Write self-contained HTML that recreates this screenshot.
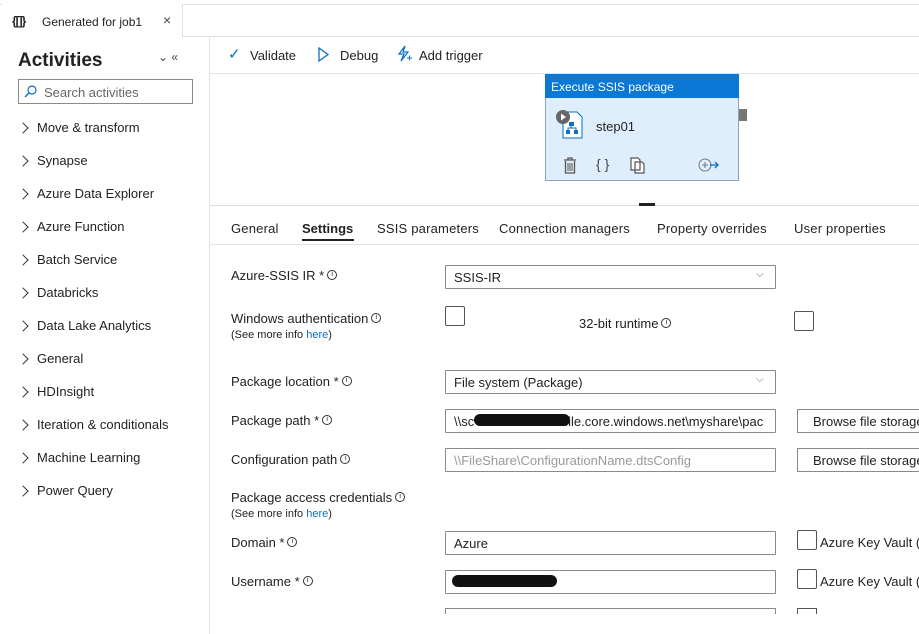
<!DOCTYPE html>
<html><head><style>
*{box-sizing:border-box;margin:0;padding:0}
body{width:919px;height:634px;overflow:hidden;background:#fff;font-family:"Liberation Sans",sans-serif;color:#222;font-size:13px;position:relative}
.a{position:absolute;white-space:nowrap}
.inp{position:absolute;border:1px solid #8a8a8a;height:24px;background:#fff;padding:4px 8px;font-size:13px;border-radius:1px;overflow:hidden;white-space:nowrap}
.cb{position:absolute;border:1px solid #555;width:20px;height:20px;background:#fff;border-radius:2px}
.btn{position:absolute;border:1px solid #8a8a8a;height:24px;padding:4px 15px;font-size:13px;white-space:nowrap;overflow:hidden}
.i{display:inline-block;width:10px;height:10px;border:1px solid #333;border-radius:50%;font-size:7px;line-height:8px;text-align:center;vertical-align:4px;margin-left:3px}
.side div{position:absolute;left:22px;font-size:13px}
.side div span{display:inline-block;width:8px;height:8px;border-right:1.3px solid #333;border-top:1.3px solid #333;transform:rotate(45deg);margin-right:10px;margin-left:-3px}
.lnk{color:#0a6fc2}
.sm{font-size:11px}
.tab{letter-spacing:0.2px}
</style></head><body>
<!-- top -->
<div class="a" style="left:0;top:4px;width:919px;height:1px;background:#e1e1e1"></div>
<div class="a" style="left:2px;top:4px;width:181px;height:33px;border-right:1px solid #e1e1e1;background:#fff"></div>
<div class="a" style="left:12px;top:14px;font-size:12px;font-weight:bold;letter-spacing:-1px">{[]}</div>
<div class="a" style="left:42px;top:15px;font-size:12px">Generated for job1</div>
<div class="a" style="left:163px;top:12px;font-size:14px;color:#444">×</div>
<div class="a" style="left:183px;top:36px;width:736px;height:1px;background:#e1e1e1"></div>
<!-- sidebar -->
<div class="a" style="left:209px;top:36px;width:1px;height:598px;background:#e1e1e1"></div>
<div class="a" style="left:18px;top:50px;font-size:19px;font-weight:bold;color:#222">Activities</div>
<div class="a" style="left:158px;top:50px;font-size:12px;color:#444">⌄ «</div>
<div class="a" style="left:18px;top:79px;width:175px;height:25px;border:1px solid #8a8a8a"></div>
<svg class="a" style="left:24px;top:85px" width="13" height="13"><circle cx="8" cy="5" r="4" fill="none" stroke="#0a6fc2" stroke-width="1.2"/><line x1="5" y1="8" x2="1" y2="12" stroke="#0a6fc2" stroke-width="1.3"/></svg>
<div class="a" style="left:44px;top:85px;color:#666">Search activities</div>
<div class="side">
<div style="top:120px"><span></span>Move &amp; transform</div>
<div style="top:153px"><span></span>Synapse</div>
<div style="top:186px"><span></span>Azure Data Explorer</div>
<div style="top:219px"><span></span>Azure Function</div>
<div style="top:252px"><span></span>Batch Service</div>
<div style="top:285px"><span></span>Databricks</div>
<div style="top:318px"><span></span>Data Lake Analytics</div>
<div style="top:351px"><span></span>General</div>
<div style="top:384px"><span></span>HDInsight</div>
<div style="top:417px"><span></span>Iteration &amp; conditionals</div>
<div style="top:450px"><span></span>Machine Learning</div>
<div style="top:483px"><span></span>Power Query</div>
</div>
<!-- toolbar -->
<div class="a" style="left:228px;top:45px;color:#0a6fc2;font-size:15px">✓</div>
<div class="a" style="left:250px;top:48px">Validate</div>
<svg class="a" style="left:317px;top:46px" width="13" height="17"><path d="M2 2 L11 8.5 L2 15 Z" fill="none" stroke="#0a6fc2" stroke-width="1.3"/></svg>
<div class="a" style="left:340px;top:48px">Debug</div>
<svg class="a" style="left:396px;top:45px" width="16" height="18"><path d="M9 1 L3 9 L8 9 L5 16 L12 7 L7 7 Z" fill="none" stroke="#0a6fc2" stroke-width="1.2"/><path d="M11 13h5M13.5 10.5v5" stroke="#0a6fc2"/></svg>
<div class="a" style="left:419px;top:48px">Add trigger</div>
<div class="a" style="left:210px;top:73px;width:709px;height:1px;background:#e1e1e1"></div>
<!-- node -->
<div class="a" style="left:545px;top:74px;width:194px;height:107px;background:#deeefc;border:1px solid #8aa4bb"></div>
<div class="a" style="left:545px;top:74px;width:194px;height:24px;background:#0a78d4;color:#fff;font-size:12px;padding:6px 6px">Execute SSIS package</div>
<div class="a" style="left:739px;top:109px;width:8px;height:12px;background:#777"></div>
<svg class="a" style="left:555px;top:109px" width="32" height="32"><path d="M8 3 H22 L27 8 V29 H8 Z" fill="#fff" stroke="#0a6fc2"/><rect x="14" y="13" width="5" height="4" fill="#0a6fc2"/><rect x="11" y="21" width="4" height="4" fill="#0a6fc2"/><rect x="19" y="21" width="4" height="4" fill="#0a6fc2"/><path d="M16 17v2M13 21v-2h8v2" stroke="#0a6fc2" fill="none"/><circle cx="8" cy="8" r="7" fill="#666"/><path d="M6 4.5 L11 8 L6 11.5Z" fill="#fff"/></svg>
<div class="a" style="left:596px;top:119px;font-size:13px">step01</div>
<svg class="a" style="left:562px;top:157px" width="16" height="17"><path d="M2 3h12M6 3V1h4v2M3.5 4v12h9V4" fill="none" stroke="#555" stroke-width="1.3"/><path d="M6 6v8M8 6v8M10 6v8" stroke="#555"/></svg>
<div class="a" style="left:596px;top:156px;font-size:14px;color:#444">{ }</div>
<svg class="a" style="left:630px;top:157px" width="16" height="17"><path d="M1 1h7l2 2v10H1Z M5 5h7l2 2v9H5Z" fill="#fff" stroke="#555" stroke-width="1.2"/></svg>
<svg class="a" style="left:698px;top:158px" width="24" height="14"><circle cx="7" cy="7" r="6" fill="none" stroke="#777"/><path d="M7 4v6M4 7h6" stroke="#777"/><path d="M12 7h8M17 4l3 3-3 3" fill="none" stroke="#0a6fc2" stroke-width="1.3"/></svg>
<!-- splitter -->
<div class="a" style="left:210px;top:205px;width:709px;height:1px;background:#ddd"></div>
<div class="a" style="left:639px;top:203px;width:16px;height:3px;background:#222"></div>
<!-- tabs -->
<div class="a tab" style="left:231px;top:221px">General</div>
<div class="a" style="left:302px;top:221px;font-weight:bold">Settings</div>
<div class="a" style="left:302px;top:239px;width:52px;height:2px;background:#222"></div>
<div class="a tab" style="left:377px;top:221px">SSIS parameters</div>
<div class="a tab" style="left:499px;top:221px">Connection managers</div>
<div class="a tab" style="left:657px;top:221px">Property overrides</div>
<div class="a tab" style="left:794px;top:221px">User properties</div>
<div class="a" style="left:210px;top:244px;width:709px;height:1px;background:#e1e1e1"></div>
<!-- form -->
<div class="a" style="left:231px;top:268px">Azure-SSIS IR *<span class="i">i</span></div>
<div class="inp" style="left:445px;top:265px;width:331px">SSIS-IR</div><div class="a" style="left:756px;top:269px;color:#666;font-size:10px">⌵</div>
<div class="a" style="left:231px;top:311px">Windows authentication<span class="i">i</span></div>
<div class="a sm" style="left:231px;top:329px">(See more info <span class="lnk">here</span>)</div>
<div class="cb" style="left:445px;top:306px"></div>
<div class="a" style="left:579px;top:316px">32-bit runtime<span class="i">i</span></div>
<div class="cb" style="left:794px;top:311px"></div>
<div class="a" style="left:231px;top:374px">Package location *<span class="i">i</span></div>
<div class="inp" style="left:445px;top:370px;width:331px">File system (Package)</div><div class="a" style="left:756px;top:374px;color:#666;font-size:10px">⌵</div>
<div class="a" style="left:231px;top:413px">Package path *<span class="i">i</span></div>
<div class="inp" style="left:445px;top:409px;width:331px">\\sc&nbsp;&nbsp;&nbsp;&nbsp;&nbsp;&nbsp;&nbsp;&nbsp;&nbsp;&nbsp;&nbsp;&nbsp;&nbsp;&nbsp;&nbsp;&nbsp;&nbsp;&nbsp;&nbsp;&nbsp;&nbsp;&nbsp;&nbsp;&nbsp;&nbsp;file.core.windows.net\myshare\pac</div>
<div class="a" style="left:474px;top:414px;width:96px;height:12px;background:#111;border-radius:6px"></div>
<div class="btn" style="left:797px;top:409px;width:130px">Browse file storage</div>
<div class="a" style="left:231px;top:452px">Configuration path<span class="i">i</span></div>
<div class="inp" style="left:445px;top:448px;width:331px;color:#999">\\FileShare\ConfigurationName.dtsConfig</div>
<div class="btn" style="left:797px;top:448px;width:130px">Browse file storage</div>
<div class="a" style="left:231px;top:490px">Package access credentials<span class="i">i</span></div>
<div class="a sm" style="left:231px;top:508px">(See more info <span class="lnk">here</span>)</div>
<div class="a" style="left:231px;top:535px">Domain *<span class="i">i</span></div>
<div class="inp" style="left:445px;top:531px;width:331px">Azure</div>
<div class="cb" style="left:797px;top:530px"></div>
<div class="a" style="left:820px;top:535px">Azure Key Vault (</div>
<div class="a" style="left:231px;top:574px">Username *<span class="i">i</span></div>
<div class="inp" style="left:445px;top:570px;width:331px"></div>
<div class="a" style="left:452px;top:575px;width:105px;height:12px;background:#111;border-radius:6px"></div>
<div class="cb" style="left:797px;top:569px"></div>
<div class="a" style="left:820px;top:574px">Azure Key Vault (</div>
<div class="a" style="left:445px;top:608px;width:331px;height:6px;border:1px solid #8a8a8a;border-bottom:none"></div>
<div class="a" style="left:797px;top:608px;width:20px;height:6px;border:1px solid #555;border-bottom:none"></div>
</body></html>
